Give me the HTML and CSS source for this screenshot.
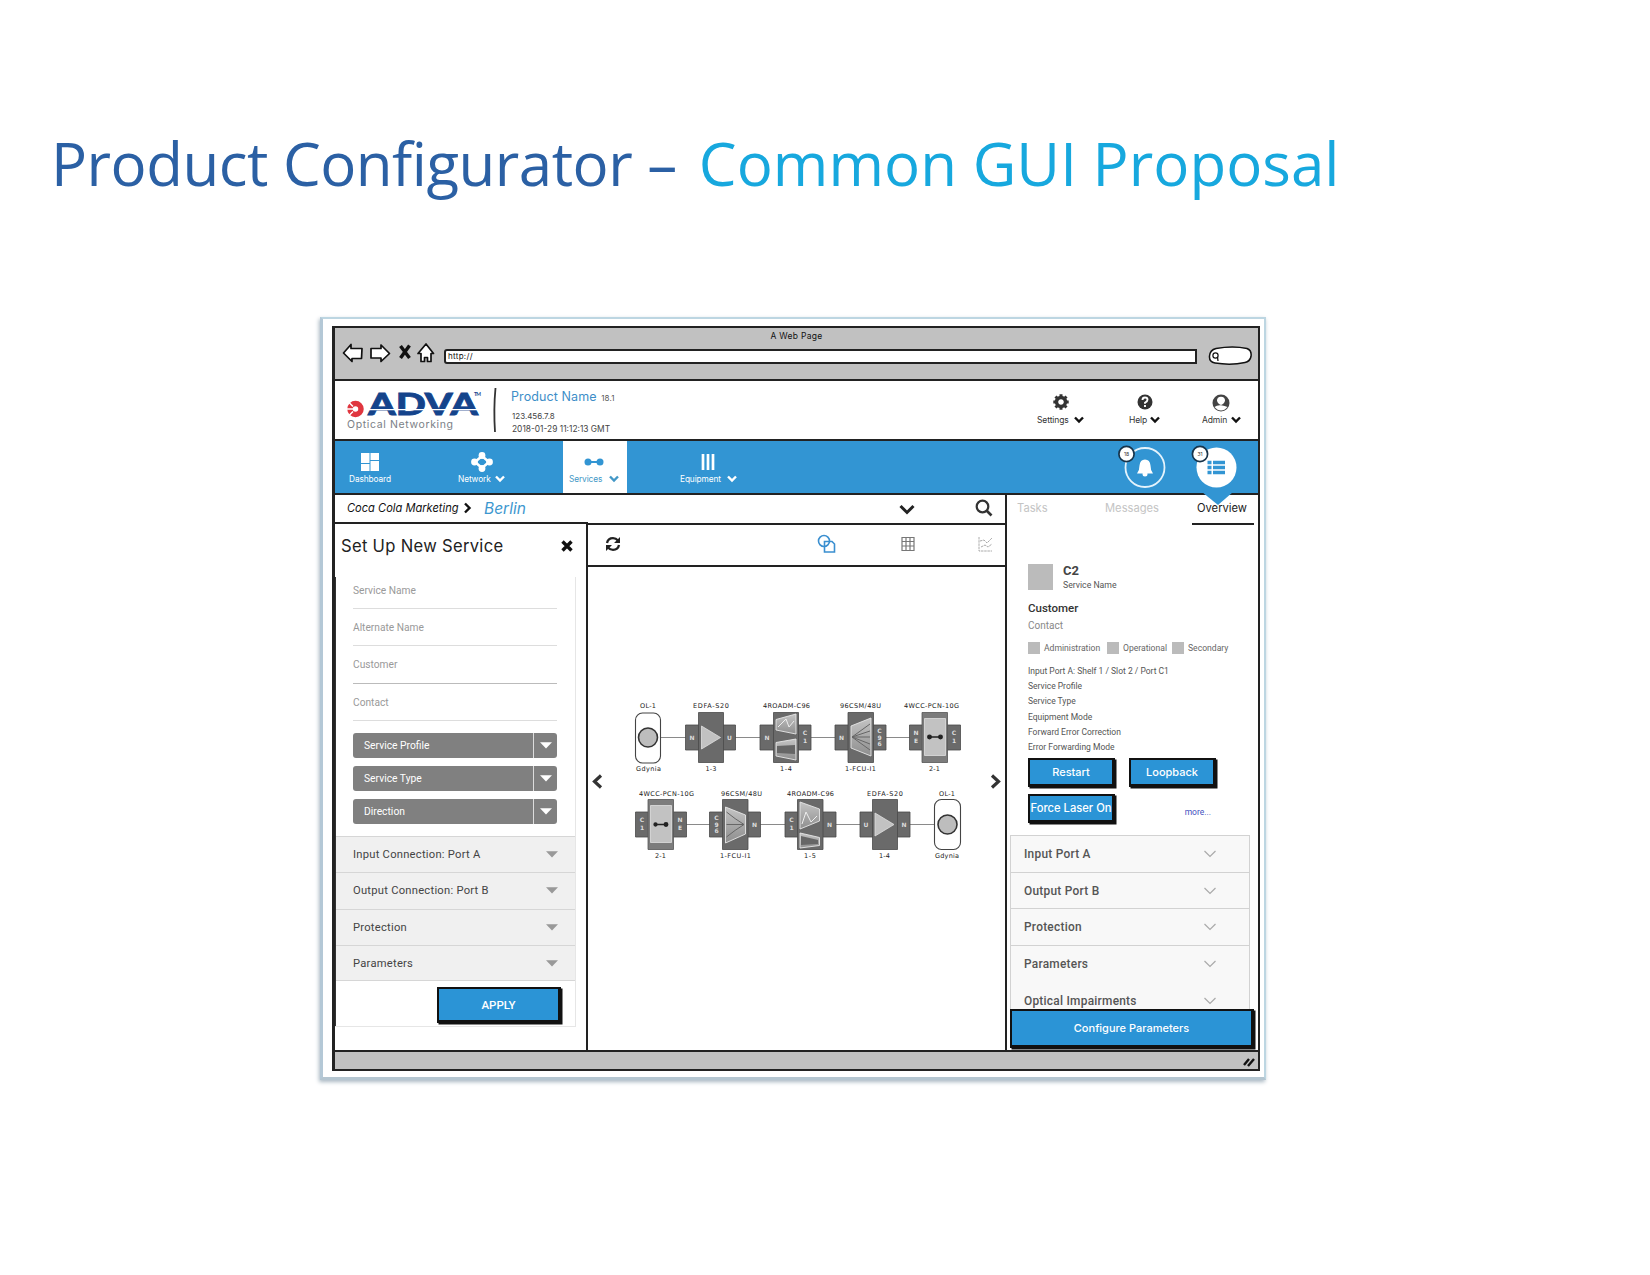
FILE: index.html
```html
<!DOCTYPE html>
<html lang="en">
<head>
<meta charset="utf-8">
<title>Product Configurator – Common GUI Proposal</title>
<link rel="stylesheet" href="styles.css">
</head>
<body>
<svg class="defs" width="0" height="0">
  <defs>
    <symbol id="chev" viewBox="0 0 10 8"><path d="M1 1.500 5 5.600 9 1.500" fill="none" stroke="currentColor" stroke-width="2.400"/></symbol>
    <symbol id="thin" viewBox="0 0 12 8"><path d="M.5 1 6 6.500 11.500 1" fill="none" stroke="#aaa" stroke-width="1.200"/></symbol>
    <symbol id="tri" viewBox="0 0 12 7"><path d="M0 .3h12L6 6.500z" fill="currentColor"/></symbol>
    <linearGradient id="lens" x1="0" x2="0" y1="0" y2="1"><stop offset="0" stop-color="#c4c4c4"/><stop offset="1" stop-color="#8e8e8e"/></linearGradient>
  </defs>
</svg>
<main class="slide">
  <h1 class="title">Product Configurator – <span class="accent">Common GUI Proposal</span></h1>
  <div class="frame">
    <div class="window">
      <header class="chrome">
        <div class="chrome-title">A Web Page</div>
        <div class="chrome-bar">
          <svg class="chrome-icons" viewBox="340 342 100 24" width="100" height="24">
            <g fill="#fff" stroke="#111" stroke-width="1.700" stroke-linejoin="round">
              <path d="M343.500 353 351 344.500v4h11l-.5 10H352v3z"/>
              <path d="M389.500 353.500 381 345v3.500h-10v9.500h10v3.500z"/>
              <path d="m426 344 7.500 9.500h-2.500v8h-3.500v-4h-3v4H421v-8h-3z"/>
            </g>
            <path d="m400.500 346 9 12m0-12.500-9 12.500" stroke="#111" stroke-width="3.400" fill="none"/>
          </svg>
          <div class="url">http://</div>
          <svg class="pill" viewBox="1207 346 46 20" width="46" height="20">
            <path d="M1215 348.500q17-3 31 0 5 2 4 8-1 5-6 6-14 3-30 .5-6-1-5.500-7 .5-6 6.500-7.500z" fill="#fff" stroke="#111" stroke-width="1.500"/>
            <circle cx="1214.500" cy="355.500" r="2.600" fill="none" stroke="#111" stroke-width="1.200"/><path d="m1216.500 357 .5 4" stroke="#111" stroke-width="1.200"/>
          </svg>
        </div>
      </header>

      <section class="brand">
        <svg class="logo" viewBox="345 382 140 52" width="140" height="52">
          <circle cx="355.500" cy="409" r="5.500" fill="none" stroke="#e0363f" stroke-width="5.500"/>
          <path d="M345 409h8M348 401.500l5 5M348 416.500l5-5" stroke="#fff" stroke-width="1.500"/>
          <text x="368" y="415" class="logo-name" textLength="110" lengthAdjust="spacingAndGlyphs">ADVA</text>
          <path d="M366 409.600h112" stroke="#fff" stroke-width="1.200"/>
          <text x="474" y="395.500" class="logo-tm" textLength="7">TM</text>
          <text x="347" y="428" class="logo-sub" textLength="106">Optical Networking</text>
        </svg>
        <svg class="rule" viewBox="0 0 6 46" width="6" height="46"><path d="M3.500 1Q1.500 22 3 45" fill="none" stroke="#333" stroke-width="1.800"/></svg>
        <div class="product">
          <div class="product-name">Product Name <span class="version">18.1</span></div>
          <div class="meta">123.456.7.8</div>
          <div class="meta date">2018-01-29 11:12:13 GMT</div>
        </div>
        <nav class="tools">
          <div class="tool settings">
            <svg width="16" height="16" viewBox="-8 -8 16 16"><circle r="4.500" fill="none" stroke="#333" stroke-width="3.400"/><g stroke="#333" stroke-width="3"><path d="M0-7.700v2M0 5.700v2M-7.700 0h2M5.700 0h2M-5.500-5.500l1.500 1.500M5.500 5.500 4 4M5.500-5.500 4-4M-5.500 5.500 -4 4"/></g></svg>
            <span>Settings <svg class="chev"><use href="#chev"/></svg></span>
          </div>
          <div class="tool help">
            <svg width="16" height="16" viewBox="-8 -8 16 16"><circle r="7.500" fill="#333"/><path d="M-2.500-2q0-2.500 2.500-2.500t2.500 2.200Q2.500-.7 0 .8v1M0 3v2" fill="none" stroke="#fff" stroke-width="1.900"/></svg>
            <span>Help <svg class="chev"><use href="#chev"/></svg></span>
          </div>
          <div class="tool admin">
            <svg width="18" height="18" viewBox="-9 -9 18 18"><circle r="8.500" fill="#444"/><path d="M-4-2.500Q-4-6.300 0-6.300t4 3.800Q3.500.8 0 2-3.500.8-4-2.500z" fill="#fff"/><path d="M-6.500 4Q-4 1.800 0 2.200t6.500 1.800Q3.500 7.500 0 7.500t-6.500-3.500z" fill="#fff"/></svg>
            <span>Admin <svg class="chev"><use href="#chev"/></svg></span>
          </div>
        </nav>
      </section>

      <nav class="mainnav">
        <div class="item dashboard">
          <svg width="20" height="20" viewBox="0 0 20 20"><path d="M1 1h8.500v10H1zM10.500 1H19v7h-8.500zM1 12h8.500v7H1zM10.500 9H19v10h-8.500z" fill="#fff"/></svg>
          <span>Dashboard</span>
        </div>
        <div class="item network">
          <svg width="22" height="20" viewBox="0 0 22 20"><path d="M11 4 18 10l-7 6-7-6z" fill="none" stroke="#fff" stroke-width="2.500"/><g fill="#fff"><circle cx="11" cy="3.500" r="3.400"/><circle cx="11" cy="16.500" r="3.400"/><circle cx="3.500" cy="10" r="3.400"/><circle cx="18.500" cy="10" r="3.400"/></g></svg>
          <span>Network <svg class="chev"><use href="#chev"/></svg></span>
        </div>
        <div class="item services">
          <svg width="20" height="20" viewBox="0 0 20 20"><path d="M4 10h12" stroke="#3295d3" stroke-width="2"/><circle cx="4" cy="10" r="3.500" fill="#3295d3"/><circle cx="16" cy="10" r="3.500" fill="#3295d3"/></svg>
          <span>Services <svg class="chev"><use href="#chev"/></svg></span>
        </div>
        <div class="item equipment">
          <svg width="16" height="20" viewBox="0 0 16 20"><path d="M3 2v16M8 2v16M13 2v16" stroke="#fff" stroke-width="2.700"/></svg>
          <span>Equipment <svg class="chev"><use href="#chev"/></svg></span>
        </div>
        <svg class="alerts" viewBox="1114 441 134 66" width="134" height="66">
          <circle cx="1145" cy="467.500" r="19.500" fill="none" stroke="#e4f3fc" stroke-width="1.800"/>
          <path d="M1145 459.500q5 0 5.500 6 0 5 2.500 8h-16q2.500-3 2.500-8 .5-6 5.500-6z" fill="#fff"/><circle cx="1145" cy="474" r="2.500" fill="#fff"/>
          <circle cx="1126.500" cy="454" r="7.600" fill="#fff" stroke="#17344b" stroke-width="1.700"/>
          <text x="1126.500" y="456" class="count">18</text>
          <path d="M1202 492h31l-15 13z" fill="#3295d3"/>
          <circle cx="1216.500" cy="467.500" r="20" fill="#fff"/>
          <path d="M1207.500 462.500h4M1207.500 467.500h4M1207.500 472.500h4M1213 462.500h12M1213 467.500h12M1213 472.500h12" stroke="#3295d3" stroke-width="3.400"/>
          <circle cx="1200" cy="454" r="7.600" fill="#fff" stroke="#17344b" stroke-width="1.700"/>
          <text x="1200" y="456" class="count">31</text>
        </svg>
      </nav>

      <div class="body">
        <div class="work">
          <div class="crumbs">
            <span class="crumb">Coca Cola Marketing</span>
            <svg width="9" height="12" viewBox="0 0 9 12"><path d="m2 1.500 4.500 4.500L2 10.500" fill="none" stroke="#111" stroke-width="2.400"/></svg>
            <span class="current">Berlin</span>
            <svg class="drop" width="16" height="11" viewBox="0 0 16 11"><path d="m1.500 2 6.500 6.500L14.500 2" fill="none" stroke="#222" stroke-width="3"/></svg>
            <svg width="18" height="18" viewBox="0 0 18 18"><circle cx="7.500" cy="7.500" r="5.800" fill="none" stroke="#333" stroke-width="2.200"/><path d="m11.500 11.500 5 5" stroke="#333" stroke-width="2.600"/></svg>
          </div>
          <div class="split">
            <aside class="setup">
              <div class="setup-head"><span>Set Up New Service</span>
                <svg width="12" height="12" viewBox="0 0 12 12"><path d="m1.500 1.500 9 9m0-9-9 9" stroke="#111" stroke-width="3.400"/></svg>
              </div>
              <div class="form">
                <div class="field">Service Name</div>
                <div class="field">Alternate Name</div>
                <div class="field strong">Customer</div>
                <div class="field">Contact</div>
                <div class="selects">
                  <div class="select"><span>Service Profile</span><i><svg class="tri"><use href="#tri"/></svg></i></div>
                  <div class="select"><span>Service Type</span><i><svg class="tri"><use href="#tri"/></svg></i></div>
                  <div class="select"><span>Direction</span><i><svg class="tri"><use href="#tri"/></svg></i></div>
                </div>
                <div class="acc"><span>Input Connection: Port A</span><svg class="tri"><use href="#tri"/></svg></div>
                <div class="acc"><span>Output Connection: Port B</span><svg class="tri"><use href="#tri"/></svg></div>
                <div class="acc"><span>Protection</span><svg class="tri"><use href="#tri"/></svg></div>
                <div class="acc last"><span>Parameters</span><svg class="tri"><use href="#tri"/></svg></div>
                <div class="apply-row"><div class="btn apply">APPLY</div></div>
              </div>
            </aside>
            <div class="canvas">
              <div class="toolbar">
                <svg class="refresh" width="18" height="18" viewBox="0 0 18 18"><path d="M3 8Q4 3.200 9 3.200q3 0 5 2.300M15 10q-1 4.800-6 4.800-3 0-5-2.300" fill="none" stroke="#222" stroke-width="2.300"/><path d="M16 2v6h-6zM2 16v-6h6z" fill="#222"/></svg>
                <svg class="shapes" width="20" height="20" viewBox="0 0 20 20" fill="none" stroke="#3a8fd0" stroke-width="1.600"><circle cx="7" cy="7" r="5.500"/><path d="M7.500 7.500h7.500l2.500 2.500V18h-10z"/></svg>
                <svg class="grid" width="14" height="16" viewBox="0 0 14 16"><path d="M1 1.500h12v13H1zM5 1.500v13M9 1.500v13M1 5.500h12M1 10h12" fill="none" stroke="#777" stroke-width="1.200"/></svg>
                <svg width="15" height="16" viewBox="0 0 15 16" fill="none" stroke="#aaa"><path d="M1 1v14h13M2 5l4-1 3 3 5-5M3 11l4-2 3 2 4-3" stroke-dasharray="2.500 .7"/></svg>
              </div>
              <svg class="topology" viewBox="588 566 416 484" width="416" height="484">
                <g fill="none" stroke="#333" stroke-width="3.200"><path d="m601 774.500-6.500 6 6.500 6"/><path d="m992 774.500 6.500 6-6.500 6"/></g>
                <g stroke="#8a8a8a" stroke-width="1.200"><path d="M660 736.500H910M686 823.500H934"/></g>
                <g fill="#fff" stroke="#444" stroke-width="1.100"><rect x="635.500" y="712" width="25" height="50" rx="7"/><rect x="934.500" y="798.500" width="26" height="50" rx="7"/></g>
                <g fill="#bdbdbd" stroke="#333" stroke-width="1.600"><circle cx="648" cy="736.500" r="9.500"/><circle cx="947.500" cy="823.500" r="9.500"/></g>
                <g fill="#6a6a6a" stroke="#4a4a4a" stroke-width=".8">
                  <path d="M685.500 724h50v25h-50zM760 724h51v25h-51zM835 724h51v25h-51zM909.500 724h51v25h-51z"/>
                  <path d="M635.500 811h51v25h-51zM709.500 811h51v25h-51zM785 811h51v25h-51zM860 811h50v25h-50z"/>
                  <path d="M698.500 711.500h25v50h-25zM773.500 711.500h25v50h-25zM848 711.500h25.500v50H848z"/>
                  <path d="M722.500 798.500h25.500v50h-25.500zM797.500 798.500h25.500v50h-25.500zM872.500 798.500h25v50h-25z"/>
                </g>
                <g fill="#7c7c7c" stroke="#555" stroke-width=".8"><path d="M922 711.500h25.500v50H922zM648 798.500h25.500v50H648z"/></g>
                <g fill="#c2c2c2" stroke="#e0e0e0" stroke-width=".8"><path d="M701.500 725v23l19-11.500zM875 812v23l19-11.500zM924.500 717.500h21v37h-21zM650.500 804.500h21v37h-21z"/></g>
                <g fill="url(#lens)" stroke="#e6e6e6" stroke-width=".9">
                  <path d="M776 718.500 796 713v20l-20-4z"/><path d="M776 741.500 796 738v21l-20-4z"/>
                  <path d="M800 801l19.500 7v12L800 828z"/><path d="M800 832l19.500 4.500v8L800 847z"/>
                  <path d="M851 725 871 717v38l-20-8z"/><path d="M725.500 806l20 8v19l-20 9z"/>
                </g>
                <g fill="none" stroke="#666" stroke-width="1"><path d="M852 736 870 723M852 736 870 730M852 736h18M852 736l18 7M852 736l18 13M726.500 811Q735 818 744 823.500 735 829 726.500 836M726.500 823.500H744"/></g>
                <path d="M777 745l18-1v9l-18-1zM801 835l17 4v4l-17 1z" fill="#666"/>
                <path d="m778 726 8-8 3 8 5-6M802 823l4-12 5 10 6-6" fill="none" stroke="#eee" stroke-width="1"/>
                <g stroke="#222" stroke-width="1.300" fill="#222"><path d="M929 736h12M655 823.500h12"/><circle cx="929.500" cy="736" r="1.800"/><circle cx="940.500" cy="736" r="1.800"/><circle cx="655.500" cy="823.500" r="1.500"/><circle cx="666" cy="823.500" r="1.800"/></g>
                <g class="port">
                  <text x="692" y="738.500">N</text><text x="729.500" y="738.500">U</text><text x="767" y="738.500">N</text><text x="805" y="734">C</text><text x="805" y="742">1</text>
                  <text x="841.500" y="738.500">N</text><text x="879.500" y="732">C</text><text x="879.500" y="738.500">9</text><text x="879.500" y="745">6</text><text x="916" y="734">N</text><text x="916" y="742">E</text><text x="954" y="734">C</text><text x="954" y="742">1</text>
                  <text x="642" y="821">C</text><text x="642" y="829">1</text><text x="680" y="821">N</text><text x="680" y="829">E</text><text x="716.500" y="819">C</text><text x="716.500" y="825.500">9</text><text x="716.500" y="832">6</text><text x="754.500" y="825.500">N</text>
                  <text x="791.500" y="821">C</text><text x="791.500" y="829">1</text><text x="829.500" y="825.500">N</text><text x="866" y="825.500">U</text><text x="904" y="825.500">N</text>
                </g>
                <g class="nlabel">
                  <text x="640" y="707" textLength="16">OL-1</text><text x="693" y="707" textLength="36">EDFA-S20</text><text x="763" y="707" textLength="47">4ROADM-C96</text><text x="840" y="707" textLength="41">96CSM/48U</text><text x="904" y="707" textLength="55">4WCC-PCN-10G</text>
                  <text x="636" y="769.500" textLength="25">Gdynia</text><text x="705.500" y="769.500" textLength="11">1-3</text><text x="780" y="769.500" textLength="12">1-4</text><text x="845" y="769.500" textLength="31">1-FCU-I1</text><text x="929" y="769.500" textLength="11">2-1</text>
                  <text x="639" y="794.500" textLength="55">4WCC-PCN-10G</text><text x="721" y="794.500" textLength="41">96CSM/48U</text><text x="787" y="794.500" textLength="47">4ROADM-C96</text><text x="867" y="794.500" textLength="36">EDFA-S20</text><text x="939" y="794.500" textLength="16">OL-1</text>
                  <text x="655" y="857" textLength="11">2-1</text><text x="720" y="857" textLength="31">1-FCU-I1</text><text x="804" y="857" textLength="12">1-5</text><text x="879" y="857" textLength="11">1-4</text><text x="935" y="857" textLength="24">Gdynia</text>
                </g>
              </svg>
            </div>
          </div>
        </div>

        <aside class="info">
          <div class="tabs"><span class="t1">Tasks</span><span class="t2">Messages</span><span class="t3">Overview</span></div>
          <div class="details">
            <div class="ident"><b class="avatar"></b><div><div class="code">C2</div><div class="sub">Service Name</div></div></div>
            <div class="customer">Customer</div>
            <div class="contact">Contact</div>
            <div class="states"><span class="s1">Administration</span><span class="s2">Operational</span><span class="s3">Secondary</span></div>
            <div class="lines">
              <div>Input Port A: Shelf 1 / Slot 2 / Port C1</div><div>Service Profile</div><div>Service Type</div><div>Equipment Mode</div><div>Forward Error Correction</div><div>Error Forwarding Mode</div>
            </div>
            <div class="actions">
              <div class="btn">Restart</div><div class="btn">Loopback</div>
              <div class="btn force">Force Laser On</div><a class="more">more...</a>
            </div>
          </div>
          <div class="ports">
            <div class="port-row">Input Port A<svg class="thin"><use href="#thin"/></svg></div>
            <div class="port-row">Output Port B<svg class="thin"><use href="#thin"/></svg></div>
            <div class="port-row">Protection<svg class="thin"><use href="#thin"/></svg></div>
            <div class="port-row open">Parameters<svg class="thin"><use href="#thin"/></svg></div>
            <div class="port-row">Optical Impairments<svg class="thin"><use href="#thin"/></svg></div>
          </div>
          <div class="btn configure">Configure Parameters</div>
        </aside>
      </div>
      <footer class="status"><svg width="12" height="12" viewBox="0 0 12 12"><path d="m1 9 5-6M5 10l6-7" stroke="#111" stroke-width="2.400"/></svg></footer>
    </div>
  </div>
</main>
</body>
</html>
```
FILE: styles.css
```css
* { box-sizing: border-box; }
body { margin: 0; background: #fff; font-family: Inter, "Open Sans", sans-serif; color: #333; }
.defs { position: absolute; }
svg { display: block; flex: none; }
.slide { width: 1650px; height: 1275px; padding: 121px 0 0 51px; overflow: hidden; }
.title { margin: 0; height: 196px; font: 400 60px/84px "Open Sans", sans-serif; color: #2b60a4; white-space: nowrap; letter-spacing: -.5px; }
.accent { color: #17a8de; margin-left: 7px; letter-spacing: .05px; }
.frame { width: 946px; height: 763px; margin-left: 269px; padding: 7px 4px 6px 9px; border: 2px solid #bdd6e2; border-left: 3px solid #b4c8d6; border-bottom: 3px solid #b4c5d0; box-shadow: -1px 2px 4px #a9b8c3; }
.window { width: 928px; height: 745px; border: 2px solid #222; border-left-width: 3px; display: flex; flex-direction: column; background: #fff; }

.chrome { height: 53px; flex: none; background: #c1c1c1; border-bottom: 2px solid #222; }
.chrome-title { height: 15px; padding-top: 2px; text-align: center; font-size: 8.500px; line-height: 12px; color: #111; letter-spacing: .3px; }
.chrome-bar { display: flex; padding-left: 5px; }
.chrome-icons { margin-top: -1px; }
.url { width: 753px; height: 15px; margin: 6px 11px 0 4px; border: 2px solid #222; border-radius: 3px 0 0 3px; background: #fff; font-size: 8px; line-height: 11px; padding-left: 2px; color: #111; letter-spacing: .3px; }
.pill { margin-top: 3px; }

.brand { height: 60px; flex: none; display: flex; border-bottom: 2px solid #222; padding-left: 10px; }
.logo { margin-top: 1px; }
.logo-name { font: 900 31px/1 Lato, sans-serif; fill: #14438b; stroke: #14438b; stroke-width: .8px; }
.logo-tm { font: 700 5px Lato, sans-serif; fill: #14438b; }
.logo-sub { font: 400 10.500px Inter, sans-serif; fill: #7a8086; }
.rule { margin: 6px 13px 0 7px; }
.product { width: 300px; padding-top: 7px; }
.product-name { font-size: 12.500px; line-height: 17px; color: #3d8ec8; white-space: nowrap; letter-spacing: .1px; }
.version { font-size: 8px; color: #555; margin-left: 1px; }
.meta { font-size: 8px; line-height: 13px; color: #444; padding: 3px 0 0 1px; height: 15px; }
.date { padding-top: 1px; font-size: 8.400px; }
.tools { margin-left: auto; display: flex; padding: 13px 17px 0 0; }
.tool { display: flex; flex-direction: column; height: 36px; }
.tool > svg { height: 16px; }
.tool span, .item span { display: flex; align-items: center; justify-content: space-between; font-size: 8.500px; line-height: 12px; margin-top: 4px; letter-spacing: -.1px; white-space: nowrap; }
.chev { width: 10px; height: 8px; }
.tool .chev { color: #111; }
.settings { width: 47px; margin-right: 45px; }
.settings > svg { margin-left: 16px; }
.help { width: 31px; margin-right: 42px; }
.help > svg { margin-left: 8px; }
.admin { width: 39px; }
.admin > svg { margin-left: 10px; height: 18px; margin-bottom: -2px; }

.mainnav { height: 54px; flex: none; background: #3295d3; border-bottom: 2px solid #222; display: flex; color: #fff; padding-left: 14px; }
.item { display: flex; flex-direction: column; padding-top: 11px; }
.item > svg { margin: 0 auto; }
.item span { margin-top: 1px; font-size: 8.300px; }
.dashboard { width: 42px; margin-right: 67px; }
.network { width: 47px; margin-right: 58px; }
.network > svg { margin-left: 13px; }
.services { width: 64px; background: #fff; color: #4297c6; padding-left: 6px; padding-right: 8px; margin-right: 53px; }
.services > svg { margin-left: 15px; }
.equipment { width: 57px; }
.equipment > svg { margin-left: 20px; }
.alerts { margin: 0 10px -14px auto; position: relative; }
.count { font: 5px Inter, sans-serif; fill: #333; text-anchor: middle; }

.body { flex: 1; display: flex; min-height: 0; }
.work { width: 670px; display: flex; flex-direction: column; }
.crumbs { height: 28px; flex: none; display: flex; align-items: center; padding: 0 0 2px 12px; font-style: italic; color: #111; }
.crumb { width: 111px; font-size: 11.100px; white-space: nowrap; margin-right: 5px; }
.current { width: 50px; font-size: 15.500px; color: #3d97cf; margin-left: 12px; }
.drop { margin: 2px 60px 0 365px; }
.split { flex: 1; display: flex; min-height: 0; }
.setup { width: 253px; margin-top: -1px; border: solid #222; border-width: 2px 2px 0 0; background: #fff; }
.setup-head { height: 53px; display: flex; align-items: center; justify-content: space-between; padding: 0 13px 9px 6px; font-size: 16.600px; color: #222; letter-spacing: .3px; white-space: nowrap; }
.form { width: 241px; height: 450px; border: solid #e6e6e6; border-width: 0 1px 1px 0; box-shadow: inset 1px 0 #333; font-family: Roboto, sans-serif; }
.field { margin-left: 18px; width: 204px; height: 37.300px; padding-top: 12px; font-size: 10.200px; line-height: 13px; color: #999; border-bottom: 1.500px solid #ddd; }
.field:first-child { height: 32px; padding-top: 7px; }
.strong { border-color: #bbb; }
.selects { padding: 12px 0 12px 18px; display: flex; flex-direction: column; gap: 8px; }
.select { width: 204px; height: 25px; border-radius: 3px; background: #808080; color: #fff; font-size: 10.300px; display: flex; align-items: center; justify-content: space-between; padding-left: 11px; }
.select i { width: 24px; height: 25px; border-left: 1px solid #ddd; display: flex; align-items: center; justify-content: center; }
.tri { width: 12px; height: 7px; color: #999; }
.select .tri { color: #fff; }
.acc { margin-left: 1px; height: 36.400px; border-top: 1px solid #d6d6d6; background: #f0f0f0; display: flex; align-items: center; justify-content: space-between; padding: 0 17px 0 17px; font-size: 11.200px; color: #444; letter-spacing: .25px; }
.last { border-bottom: 1px solid #d6d6d6; }
.apply-row { padding: 6px 0 0 102px; }
.btn { display: flex; align-items: center; justify-content: center; background: #2b94d6; color: #fff; border: 2px solid #111; border-width: 2px 3px 3px 2px; box-shadow: 1.500px 1.500px #111; font: 500 11px Inter, sans-serif; white-space: nowrap; }
.apply { width: 124px; height: 36px; font-family: Roboto, sans-serif; font-size: 11.500px; }

.canvas { flex: 1; border-top: 2px solid #222; display: flex; flex-direction: column; min-width: 0; }
.toolbar { height: 42px; flex: none; display: flex; align-items: center; padding: 0 12px 2px 16px; border-bottom: 2px solid #222; }
.shapes { margin-left: 195px; }
.grid { margin: 0 auto; }
.port text { font: 700 6px "DejaVu Sans", sans-serif; fill: #ddd; text-anchor: middle; }
.nlabel text { font: 6.500px "DejaVu Sans", sans-serif; fill: #222; }

.info { flex: 1; border-left: 2px solid #222; display: flex; flex-direction: column; font-family: Roboto, sans-serif; min-width: 0; }
.tabs { display: flex; height: 30px; flex: none; padding: 0 4px 0 10px; font: 11.200px/26px Inter, sans-serif; color: #c4c4c4; }
.t1 { width: 88px; }
.t2 { width: 87px; }
.t3 { width: 62px; padding-left: 5px; border-bottom: 2px solid #222; color: #222; position: relative; }
.details { padding: 39px 0 0 21px; height: 310px; flex: none; }
.ident { display: flex; gap: 10px; height: 36px; }
.avatar { width: 25px; height: 26px; background: #bbb; }
.code { font: 700 13px/14px Roboto, sans-serif; color: #444; }
.sub { font-size: 8.700px; line-height: 14px; color: #555; }
.customer { font-size: 11.500px; font-weight: 500; line-height: 17px; color: #333; }
.contact { font-size: 10px; line-height: 18px; color: #888; }
.states { display: flex; height: 28px; padding-top: 7px; font-size: 8.600px; line-height: 13px; color: #666; }
.states span::before { content: ""; display: inline-block; width: 12px; height: 12px; background: #bbb; margin-right: 4px; vertical-align: -3px; }
.states span { white-space: nowrap; }
.s1 { width: 79px; } .s2 { width: 65px; }
.lines { font-size: 8.500px; line-height: 15.200px; height: 95px; padding-top: 1px; color: #555; }
.actions { display: grid; grid-template-columns: 88px 88px; gap: 7px 13px; }
.actions .btn { height: 29px; width: 87px; }
.actions .force { font-size: 11.200px; }
.more { color: #4450c0; font-size: 8.500px; align-self: center; justify-self: end; padding: 6px 6px 0 0; }
.ports { margin-left: 3px; width: 240px; height: 174px; overflow: hidden; border: 1px solid #d2d2d2; border-bottom: 0; background: #f8f8f8; flex: none; }
.port-row { height: 36.700px; border-bottom: 1px solid #d2d2d2; display: flex; align-items: center; justify-content: space-between; padding: 0 33px 0 13px; font-size: 11.900px; font-weight: 500; color: #555; letter-spacing: .25px; }
.open { border-color: transparent; }
.thin { width: 12px; height: 8px; }
.configure { margin-left: 3px; width: 244px; height: 39px; font-size: 11px; }
.status { height: 19px; flex: none; background: #c1c1c1; border-top: 2px solid #222; display: flex; justify-content: flex-end; padding: 4px 3px 0 0; }
```
